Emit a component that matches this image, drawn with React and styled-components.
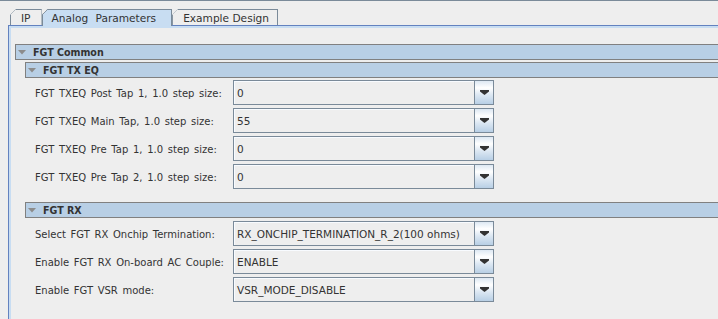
import React from 'react';
import styled, { createGlobalStyle } from 'styled-components';

const GlobalStyle = createGlobalStyle`
  html, body {
    margin: 0;
    padding: 0;
    background: #eeeeee;
    overflow: hidden;
  }
  body {
    font-family: "DejaVu Sans", "Liberation Sans", sans-serif;
  }
`;

const Window = styled.div`
  width: 760px;
  height: 319px;
  box-sizing: border-box;
  border-top: 1px solid #7a8a99;
  padding-left: 8px;
  display: flex;
  flex-direction: column;
`;

const TabStrip = styled.div`
  display: flex;
  align-items: flex-end;
  padding: 8px 0 0 2px;
  position: relative;
  z-index: 1;
`;

const Tab = styled.div`
  box-sizing: border-box;
  height: ${p => (p.$selected ? 17 : 16)}px;
  margin-bottom: ${p => (p.$selected ? -1 : 0)}px;
  padding: 0 ${p => p.$padRight || 10}px 0 ${p => p.$padLeft || 10}px;
  display: flex;
  align-items: center;
  font-size: 10.6px;
  word-spacing: ${p => p.$wordSpacing || 0}px;
  color: #333333;
  border: 1px solid #7a8a99;
  border-bottom: none;
  clip-path: polygon(6px 0, 100% 0, 100% 100%, 0 100%, 0 6px);
  background: linear-gradient(
      135deg,
      transparent 3.9px,
      #7a8a99 3.9px,
      #7a8a99 4.9px,
      ${p => (p.$selected ? '#c8ddf2' : '#eeeeee')} 4.9px
    )
    border-box;
  white-space: pre;
`;

const TabBody = styled.div`
  flex: 1;
  border-top: 1px solid #6382bf;
  border-left: 1px solid #6382bf;
  box-shadow: inset 2px 2px 0 #c8ddf2;
  padding: 18px 0 0 6px;
`;

const Section = styled.div`
  display: flex;
  flex-direction: column;
  margin-top: ${p => p.$gap || 0}px;
`;

const SectionHeader = styled.div`
  height: 16px;
  box-sizing: border-box;
  border: 1px solid #808080;
  border-right: none;
  background: #b8cfe5;
  display: flex;
  align-items: center;
  padding-left: 2px;
  gap: 7px;
  font-family: "DejaVu Sans Condensed", "DejaVu Sans", sans-serif;
  font-size: 10.6px;
  font-weight: bold;
  color: #333333;
`;

const SectionBody = styled.div`
  display: flex;
  flex-direction: column;
  padding: ${p => p.$top || 0}px 0 0 10px;
`;

const FormGrid = styled.div`
  display: grid;
  grid-template-columns: 198px 261px;
  grid-auto-rows: 25px;
  row-gap: 3px;
  padding-top: 2px;
`;

const Label = styled.div`
  display: flex;
  align-items: center;
  padding-top: 2px;
  font-size: 10px;
  word-spacing: 1.5px;
  color: #333333;
  white-space: nowrap;
`;

const Combo = styled.div`
  display: flex;
  box-sizing: border-box;
  border: 1px solid #7a8a99;
  background: #eeeeee;
`;

const ComboValue = styled.div`
  flex: 1;
  display: flex;
  align-items: center;
  padding: 1px 0 0 3px;
  font-size: 10.5px;
  color: #333333;
  white-space: nowrap;
  box-shadow: inset 1px 1px 0 #f8fbff;
`;

const ComboButton = styled.div`
  width: 18px;
  border-left: 1px solid #7a8a99;
  background: linear-gradient(#dde8f3 0%, #ffffff 30%, #dde8f3 60%, #b8cfe5 100%);
  display: flex;
  align-items: center;
  justify-content: center;
`;

const Caret = () => (
  <svg width="8" height="5" viewBox="0 0 8 5">
    <polygon points="0,0 8,0 4,4.5" fill="#8c8c8c" />
  </svg>
);

const Arrow = () => (
  <svg width="9" height="5" viewBox="0 0 9 5">
    <polygon points="0,0 9,0 9,1.5 4.5,5 0,1.5" fill="#333333" />
  </svg>
);

const txRows = [
  ['FGT TXEQ Post Tap 1, 1.0 step size:', '0'],
  ['FGT TXEQ Main Tap, 1.0 step size:', '55'],
  ['FGT TXEQ Pre Tap 1, 1.0 step size:', '0'],
  ['FGT TXEQ Pre Tap 2, 1.0 step size:', '0'],
];

const rxRows = [
  ['Select FGT RX Onchip Termination:', 'RX_ONCHIP_TERMINATION_R_2(100 ohms)'],
  ['Enable FGT RX On-board AC Couple:', 'ENABLE'],
  ['Enable FGT VSR mode:', 'VSR_MODE_DISABLE'],
];

function Rows({ rows }) {
  return (
    <FormGrid>
      {rows.map(([label, value]) => (
        <React.Fragment key={label}>
          <Label>{label}</Label>
          <Combo>
            <ComboValue>{value}</ComboValue>
            <ComboButton>
              <Arrow />
            </ComboButton>
          </Combo>
        </React.Fragment>
      ))}
    </FormGrid>
  );
}

export default function App() {
  return (
    <>
      <GlobalStyle />
      <Window>
        <TabStrip>
          <Tab>IP</Tab>
          <Tab $selected $padLeft={9} $padRight={15} $wordSpacing={4}>
            Analog Parameters
          </Tab>
          <Tab $padRight={8}>Example Design</Tab>
        </TabStrip>
        <TabBody>
          <Section>
            <SectionHeader>
              <Caret />
              FGT Common
            </SectionHeader>
            <SectionBody $top={2}>
              <Section>
                <SectionHeader>
                  <Caret />
                  FGT TX EQ
                </SectionHeader>
                <SectionBody>
                  <Rows rows={txRows} />
                </SectionBody>
              </Section>
              <Section $gap={13}>
                <SectionHeader>
                  <Caret />
                  FGT RX
                </SectionHeader>
                <SectionBody $top={1}>
                  <Rows rows={rxRows} />
                </SectionBody>
              </Section>
            </SectionBody>
          </Section>
        </TabBody>
      </Window>
    </>
  );
}
